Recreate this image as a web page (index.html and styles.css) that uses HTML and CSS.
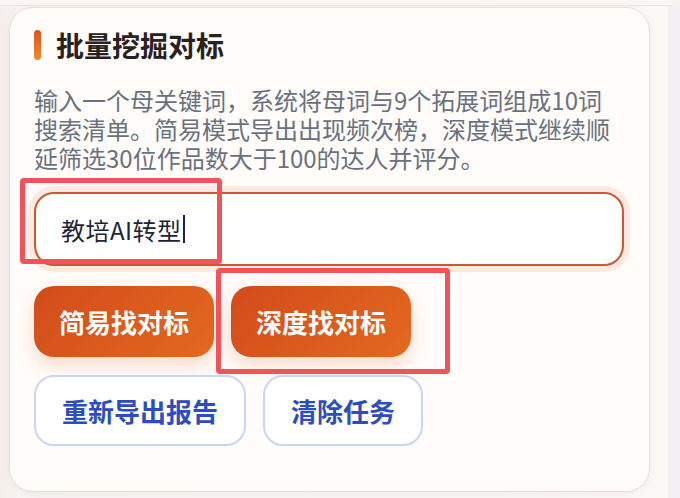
FILE: index.html
```html
<!DOCTYPE html>
<html lang="zh-CN">
<head>
<meta charset="utf-8">
<title>批量挖掘对标</title>
<link rel="stylesheet" href="styles.css">
</head>
<body>
<div class="page">
  <div class="topbar"></div>
  <div class="layout">
    <main class="main">
      <section class="card">
        <h2 class="card-title"><span class="accent"></span>批量挖掘对标</h2>
        <p class="desc">输入一个母关键词，系统将母词与9个拓展词组成10词搜索清单。简易模式导出出现频次榜，深度模式继续顺延筛选30位作品数大于100的达人并评分。</p>
        <div class="field">
          <div class="input" role="textbox"><span class="value">教培AI转型</span><span class="caret"></span></div>
        </div>
        <div class="actions">
          <button class="btn btn-primary">简易找对标</button>
          <button class="btn btn-primary">深度找对标</button>
          <button class="btn btn-outline">重新导出报告</button>
          <button class="btn btn-outline">清除任务</button>
        </div>
      </section>
    </main>
    <div class="gutter"></div>
  </div>
  <div class="mark mark-input"></div>
  <div class="mark mark-deep"></div>
</div>
</body>
</html>
```

FILE: styles.css
```css
* { box-sizing: border-box; }

html, body {
  margin: 0;
  padding: 0;
}

body {
  width: 680px;
  height: 498px;
  overflow: hidden;
  background: #f6f1ef;
  font-family: "Noto Sans CJK SC", "Noto Sans", sans-serif;
}

.page {
  position: relative;
  width: 680px;
  height: 498px;
  display: flex;
  flex-direction: column;
}

.topbar {
  height: 6px;
  background: #faf6f4;
  border-bottom: 1px solid #eee3de;
  margin-right: 8px;
}

.layout {
  flex: 1;
  display: flex;
}

.main {
  flex: 1;
  padding: 1px 0 0 9px;
  background: linear-gradient(90deg, #f5eeeb 0, #f8f4f2 20px, #fbf8f7 100%);
}

.gutter {
  width: 12px;
  background: #f2f0f3;
}

.card {
  width: 641px;
  height: 485px;
  background: #fffcf9;
  border: 1px solid #e9ddd7;
  border-radius: 24px;
  box-shadow: 0 2px 8px rgba(140, 100, 80, 0.08);
  padding: 19px 24px 0 24px;
}

.card-title {
  margin: 0;
  display: flex;
  align-items: center;
  gap: 15px;
  height: 36px;
  font-size: 28px;
  line-height: 36px;
  font-weight: 700;
  color: #2a211d;
}

.accent {
  width: 7px;
  height: 30px;
  border-radius: 4px;
  background: linear-gradient(180deg, #d9541e 0%, #f08b2c 100%);
}

.desc {
  margin: 22px 0 0 0;
  font-size: 24px;
  line-height: 29px;
  color: #6a717e;
  width: 590px;
}

.field {
  margin-top: 20px;
}

.input {
  height: 74px;
  width: 590px;
  border: 2px solid #c95a30;
  border-radius: 20px;
  background: #ffffff;
  box-shadow: 0 0 0 6px #fbe9e2;
  display: flex;
  align-items: center;
  padding-left: 25px;
  font-size: 24px;
  color: #1e2433;
}

.value {
  letter-spacing: 0.5px;
}

.caret {
  display: inline-block;
  width: 2px;
  height: 28px;
  margin-left: 1px;
  background: #1e2433;
}

.actions {
  margin-top: 20px;
  display: flex;
  flex-wrap: wrap;
  gap: 18px 17px;
}

.btn {
  height: 71px;
  border-radius: 20px;
  font-family: inherit;
  font-size: 26px;
  font-weight: 700;
  line-height: 1;
  white-space: nowrap;
  cursor: pointer;
}

.btn-primary {
  padding: 0 25px;
  border: none;
  color: #ffffff;
  background: linear-gradient(135deg, #d24b1b 0%, #e3691f 100%);
  box-shadow: 0 8px 18px rgba(220, 95, 40, 0.22);
}

.btn-outline {
  padding: 0 26px;
  border: 2px solid #c8d6f4;
  background: #ffffff;
  color: #2c4dbf;
}

.mark {
  position: absolute;
  border: 5px solid #f2525a;
  border-radius: 4px;
  pointer-events: none;
}

.mark-input {
  left: 20px;
  top: 178px;
  width: 202px;
  height: 86px;
}

.mark-deep {
  left: 216px;
  top: 268px;
  width: 234px;
  height: 106px;
}
```
